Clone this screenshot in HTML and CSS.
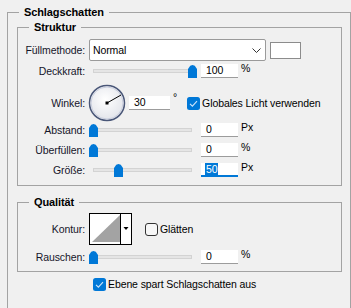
FILE: index.html
```html
<!DOCTYPE html>
<html lang="de">
<head>
  <meta charset="UTF-8">
  <title>Ebenenstil - Schlagschatten</title>
  <link rel="stylesheet" href="styles.css">
</head>
<body>
  <fieldset class="group outer">
    <legend>Schlagschatten</legend>
    <div class="outer-body">

      <!-- Struktur -->
      <fieldset class="group">
        <legend>Struktur</legend>
        <div class="struktur-body">
          <div class="row row-blend">
            <span class="lbl">Füllmethode:</span>
            <div class="select">
              <span>Normal</span>
              <svg width="9" height="5" viewBox="0 0 9 5"><polyline points="0.5,0.5 4.5,4.5 8.5,0.5" fill="none" stroke="#333" stroke-width="1"/></svg>
            </div>
            <div class="swatch"></div>
          </div>

          <div class="row">
            <span class="lbl">Deckkraft:</span>
            <div class="slider"><div class="track"></div><div class="thumb" style="left: 99px"></div></div>
            <span class="num">100</span>
            <span class="unit">%</span>
          </div>

          <div class="row row-angle">
            <span class="lbl">Winkel:</span>
            <svg class="dial" width="38" height="38" viewBox="0 0 38 38">
              <defs>
                <radialGradient id="dialFill" cx="45%" cy="40%" r="60%">
                  <stop offset="0" stop-color="#ffffff"/>
                  <stop offset="1" stop-color="#e2e4ea"/>
                </radialGradient>
              </defs>
              <circle cx="19" cy="19" r="17.5" fill="url(#dialFill)" stroke="#4a5778" stroke-width="1.5"/>
              <circle cx="19" cy="19" r="16" fill="none" stroke="#c9cede" stroke-width="1"/>
              <line x1="19" y1="19" x2="33" y2="11" stroke="#000" stroke-width="1"/>
              <rect x="17.5" y="17.5" width="3" height="3" fill="#000"/>
            </svg>
            <span class="num num-wide">30</span>
            <span class="unit deg">°</span>
            <span class="check checked">
              <svg width="13" height="13" viewBox="0 0 13 13"><rect x="0" y="0" width="13" height="13" rx="2.5" fill="#0078d7"/><polyline points="3,6.8 5.4,9.2 10,4.2" fill="none" stroke="#cfe6fa" stroke-width="1.1"/></svg>
              Globales Licht verwenden
            </span>
          </div>

          <div class="row">
            <span class="lbl">Abstand:</span>
            <div class="slider"><div class="track"></div><div class="thumb" style="left: 0px"></div></div>
            <span class="num">0</span>
            <span class="unit">Px</span>
          </div>

          <div class="row">
            <span class="lbl">Überfüllen:</span>
            <div class="slider"><div class="track"></div><div class="thumb" style="left: 0px"></div></div>
            <span class="num">0</span>
            <span class="unit">%</span>
          </div>

          <div class="row">
            <span class="lbl">Größe:</span>
            <div class="slider"><div class="track"></div><div class="thumb" style="left: 25px"></div></div>
            <span class="num focus"><span class="sel">50</span></span>
            <span class="unit">Px</span>
          </div>
        </div>
      </fieldset>

      <!-- Qualität -->
      <fieldset class="group quality">
        <legend>Qualität</legend>
        <div class="quality-body">
          <div class="row row-contour">
            <span class="lbl">Kontur:</span>
            <svg class="contour" width="43" height="32" viewBox="0 0 43 32">
              <rect x="0.5" y="0.5" width="42" height="31" fill="#fff" stroke="#000"/>
              <polygon points="3,29 31,2 31,29" fill="#a3a3a3"/>
              <line x1="31.5" y1="1" x2="31.5" y2="31" stroke="#000"/>
              <polygon points="34.5,14 39.5,14 37,17" fill="#000"/>
            </svg>
            <span class="check">
              <svg width="13" height="13" viewBox="0 0 13 13"><rect x="0.5" y="0.5" width="12" height="12" rx="2.5" fill="#f7f7f7" stroke="#333"/></svg>
              Glätten
            </span>
          </div>

          <div class="row">
            <span class="lbl">Rauschen:</span>
            <div class="slider"><div class="track"></div><div class="thumb" style="left: 0px"></div></div>
            <span class="num">0</span>
            <span class="unit">%</span>
          </div>
        </div>
      </fieldset>

      <div class="row row-knockout">
        <span class="check checked">
          <svg width="13" height="13" viewBox="0 0 13 13"><rect x="0" y="0" width="13" height="13" rx="2.5" fill="#0078d7"/><polyline points="3,6.8 5.4,9.2 10,4.2" fill="none" stroke="#cfe6fa" stroke-width="1.1"/></svg>
          Ebene spart Schlagschatten aus
        </span>
      </div>
    </div>
  </fieldset>
</body>
</html>
```

FILE: styles.css
```css
* {
  box-sizing: border-box;
}
body {
  margin: 0;
  background-color: #f0f0f0;
  font-family: 'Liberation Sans', Arial, sans-serif;
  font-size: 10.5px;
  letter-spacing: -0.1px;
  color: #15152a;
  overflow: hidden;
}
.group {
  border: 1px solid #a3a3a3;
  margin: 0;
  padding: 0;
  min-width: 0;
}
.group legend {
  font-size: 11px;
  font-weight: bold;
  color: #000;
  line-height: 14px;
  padding: 0 5px;
  margin-left: 11px;
}
.outer {
  margin: 5px 0 0 7px;
  width: 344px;
}
.outer-body {
  padding: 1px 8px 40px 9px;
}
.struktur-body {
  padding: 5px 0 5px 0;
}
.quality {
  margin-top: 9px;
}
.quality-body {
  padding: 4px 0 4px 0;
}
.row {
  display: flex;
  align-items: center;
  height: 20px;
}
.lbl {
  width: 67px;
  margin-right: 4px;
  text-align: right;
  white-space: nowrap;
}
.row-blend {
  height: 22px;
}
.select {
  width: 177px;
  height: 22px;
  background: #fff;
  border: 1px solid #9a9a9a;
  border-radius: 2px;
  display: flex;
  align-items: center;
  justify-content: space-between;
  padding: 0 4px 0 3px;
  color: #000;
}
.swatch {
  width: 31px;
  height: 17px;
  margin-left: 4px;
  background: #fff;
  border: 1px solid #8c8c8c;
}
.slider {
  position: relative;
  width: 108px;
  height: 14px;
}
.track {
  margin: 5px 5px 0 4px;
  height: 4px;
  background: #e5e5e5;
  border: 1px solid #d3d3d3;
}
.thumb {
  position: absolute;
  top: 1px;
  width: 9px;
  height: 13px;
  background: #0078d7;
  clip-path: polygon(0 30%, 25% 6%, 50% 0, 75% 6%, 100% 30%, 100% 100%, 0 100%);
}
.num {
  width: 37px;
  height: 14px;
  margin-left: 4px;
  background: #fff;
  border-bottom: 1px solid #9c9c9c;
  padding-left: 5px;
  line-height: 13px;
  color: #000;
}
.num.focus {
  border-bottom: 2px solid #0078d7;
  padding-left: 4px;
  line-height: 12px;
}
.sel {
  background: #0078d7;
  color: #fff;
  padding: 0 1px;
}
.unit {
  align-self: flex-start;
  margin-top: 1px;
  margin-left: 3px;
  line-height: 12px;
  color: #000;
}
.row-angle {
  height: 34px;
  margin-top: 5px;
}
.dial {
  margin-left: -1px;
  flex-shrink: 0;
}
.num-wide {
  width: 41px;
  margin-left: 3px;
}
.deg {
  margin-top: 5px;
  margin-left: 3px;
}
.check {
  display: flex;
  align-items: center;
  gap: 2px;
  color: #000;
  white-space: nowrap;
}
.row-angle .check {
  margin-left: 10px;
}
.row-contour {
  height: 32px;
}
.contour {
  flex-shrink: 0;
}
.row-contour .check {
  margin-left: 13px;
}
.row-contour + .row {
  margin-top: 2px;
}
.row-knockout {
  margin-top: 2px;
  padding-left: 76px;
}
```
